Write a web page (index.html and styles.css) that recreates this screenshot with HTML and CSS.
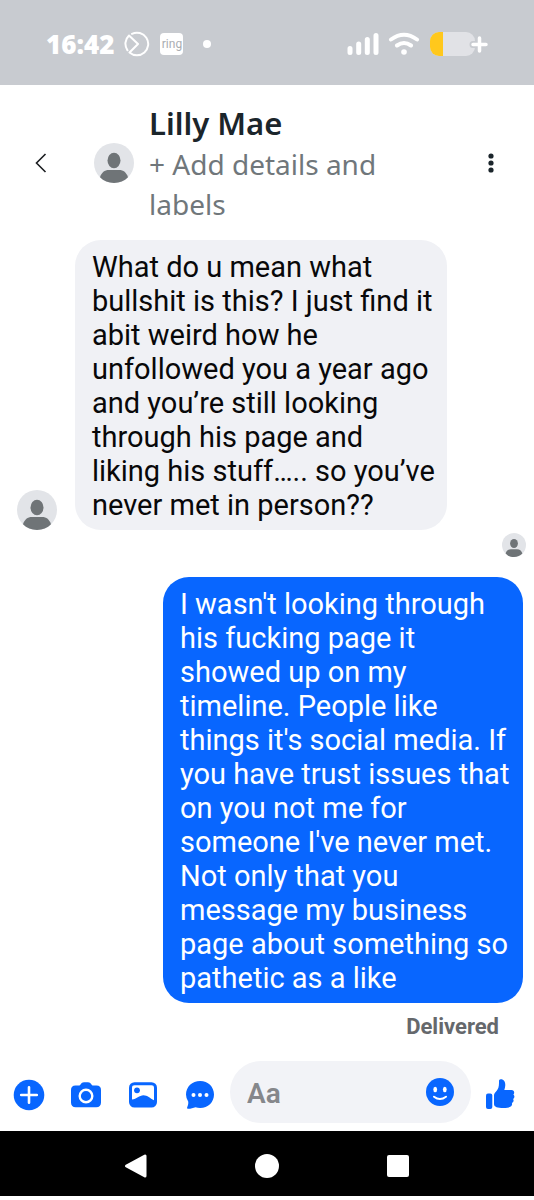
FILE: index.html
```html
<!DOCTYPE html>
<html lang="en">
<head>
<meta charset="utf-8">
<meta name="viewport" content="width=device-width, initial-scale=1">
<title>Lilly Mae</title>
<link rel="stylesheet" href="styles.css">
</head>
<body>
<svg class="defs" aria-hidden="true">
  <symbol id="avatar" viewBox="0 0 40 40">
    <circle cx="20" cy="20" r="20" fill="#e2e4e8"/>
    <ellipse cx="20" cy="17.500" rx="6.500" ry="7.700" fill="#6f7477"/>
    <path d="M6 34.300C7.500 29.500 10.500 27 15 27h10c4.500 0 7.500 2.500 9 7.300C30.500 38 25.500 40 20 40S9.500 38 6 34.300z" fill="#6f7477"/>
  </symbol>
</svg>
<div class="screen">
  <div class="status">
    <div class="status-left">
      <span class="clock">16:42</span>
      <svg width="26" height="26" viewBox="0 0 26 26" fill="none" stroke="#fff" stroke-width="2" stroke-linejoin="round" stroke-linecap="round"><path d="M8 2.800A11.300 11.300 0 1 1 5.500 21.500L14 13 5 4.500A11.300 11.300 0 0 0 3.500 19.300"/></svg>
      <span class="ring">ring</span>
      <span class="dot"></span>
    </div>
    <div class="status-right">
      <svg width="32" height="24" viewBox="0 0 32 24" stroke="#fff" stroke-width="5" stroke-linecap="round"><path d="M3 16.500v4M11.700 12v8.500M20.300 7.500v13M29 3.500v17"/></svg>
      <svg width="32" height="24" viewBox="0 0 32 24" fill="none" stroke="#fff" stroke-width="4" stroke-linecap="round"><path d="M3 7.500Q16-2 29 7.500M9 13.500Q16 8.500 23 13.500"/><circle cx="16" cy="20" r="2.800" fill="#fff" stroke="none"/></svg>
      <svg width="60" height="26" viewBox="0 0 60 26"><rect x="1" y="1" width="45" height="24" rx="9" fill="#e1e2e6"/><path d="M14 1v24h-4a9 9 0 0 1-9-9v-6a9 9 0 0 1 9-9z" fill="#ffc81c"/><path d="M50 7v13M44 13.500h13" stroke="#c8cbd0" stroke-width="7" stroke-linecap="round"/><path d="M50.500 7v13M44 13.500h13" stroke="#fff" stroke-width="3.500" stroke-linecap="round"/></svg>
    </div>
  </div>

  <header class="header">
    <button class="icon-btn" aria-label="Back"><svg width="14" height="22" viewBox="0 0 14 22" fill="none" stroke="#1c1e21" stroke-width="1.600"><path d="M11.500 2L2.500 11l9 9"/></svg></button>
    <svg class="avatar" role="img" aria-label="Profile picture"><use href="#avatar"/></svg>
    <div class="title">
      <h1>Lilly Mae</h1>
      <button class="details">+ Add details and labels</button>
    </div>
    <button class="icon-btn" aria-label="More options"><svg width="8" height="22" viewBox="0 0 8 22" fill="#1b252b"><circle cx="4" cy="4" r="2.600"/><circle cx="4" cy="11" r="2.600"/><circle cx="4" cy="18" r="2.600"/></svg></button>
  </header>

  <main class="thread">
    <div class="incoming">
      <svg class="avatar" role="img" aria-label="Lilly Mae"><use href="#avatar"/></svg>
      <p class="bubble bubble-in">What do u mean what bullshit is this? I just find it abit weird how he unfollowed you a year ago and you’re still looking through his page and liking his stuff….. so you’ve never met in person??</p>
    </div>
    <svg class="seen" role="img" aria-label="Seen"><use href="#avatar"/></svg>
    <p class="bubble bubble-out">I wasn't looking through his fucking page it showed up on my timeline. People like things it's social media. If you have trust issues that on you not me for someone I've never met. Not only that you message my business page about something so pathetic as a like</p>
    <p class="delivered">Delivered</p>
  </main>

  <form class="composer">
    <div class="tools">
    <button type="button" class="icon-btn" aria-label="Add"><svg width="32" height="32" viewBox="0 0 32 32"><circle cx="16" cy="16" r="15.300" fill="#0866ff"/><path d="M16 8.200v15.600M8.200 16h15.600" stroke="#fff" stroke-width="2.600" stroke-linecap="round"/></svg></button>
    <button type="button" class="icon-btn" aria-label="Camera"><svg width="32" height="32" viewBox="0 0 32 32"><path d="M5.500 6.500h3.200c1 0 1.500-.4 2-1.200.7-1.300 1.800-2 3.300-2h4c1.500 0 2.600.7 3.300 2 .5.800 1 1.200 2 1.200h3.200c3 0 4.500 1.700 4.500 4.500v12.500c0 3-1.700 4.700-4.700 4.700H5.700c-3 0-4.700-1.700-4.700-4.700V11c0-2.800 1.500-4.500 4.500-4.500z" fill="#0866ff"/><circle cx="16" cy="17" r="6.300" fill="none" stroke="#fff" stroke-width="2.400"/></svg></button>
    <button type="button" class="icon-btn" aria-label="Gallery"><svg width="32" height="32" viewBox="0 0 32 32"><rect x="2" y="3.200" width="28" height="25.300" rx="5.500" fill="#0866ff"/><path d="M7.500 6.200h17c1.700 0 2.500.8 2.500 2.500v12.600c-4-2-6.500-5.100-10.500-5.100-4.300 0-7 4-11.500 4.300V8.700c0-1.700.8-2.500 2.500-2.500z" fill="#fff"/><circle cx="10" cy="11.300" r="2.900" fill="#0866ff"/></svg></button>
    <button type="button" class="icon-btn" aria-label="Saved replies"><svg width="32" height="32" viewBox="0 0 32 32"><path d="M16.200 2C24 2 30 7.800 30 15.500S24 29 16.200 29c-1.700 0-3.300-.3-4.700-.8-2.200.9-4.800 1.500-7.200 1.500-1.200 0-1.500-.9-1-1.800.8-1.500 1.200-3.400.9-5.300A13 13 0 0 1 2 15.500C2 7.800 8.200 2 16.200 2z" fill="#0866ff"/><g fill="#fff"><circle cx="9.500" cy="16" r="2"/><circle cx="16" cy="16" r="2"/><circle cx="22.500" cy="16" r="2"/></g></svg></button>
    </div>
    <div class="field">
      <input type="text" placeholder="Aa" aria-label="Message">
      <button type="button" class="icon-btn" aria-label="Emoji"><svg width="28" height="28" viewBox="0 0 28 28"><circle cx="14" cy="14" r="14" fill="#0866ff"/><ellipse cx="9.200" cy="11.500" rx="1.900" ry="2.700" fill="#fff"/><ellipse cx="18.800" cy="11.500" rx="1.900" ry="2.700" fill="#fff"/><path d="M8 18.700q6 4.600 12 0" fill="none" stroke="#fff" stroke-width="2" stroke-linecap="round"/></svg></button>
    </div>
    <button type="button" class="icon-btn like" aria-label="Like"><svg width="30" height="32" viewBox="0 0 30 32" fill="#0866ff"><rect x="1" y="15.500" width="6.300" height="15.500" rx="2"/><path d="M9 17.500c0-1.800 1-2.700 2.300-4.200 2-2.300 2.700-4.500 2.700-8.300V3.200C14 2 14.600 1.300 15.700 1.300c3.300 0 4.600 2.700 4.600 5.700 0 1.800-.5 3.500-1 5h7.200c1.700 0 2.700 1 2.700 2.500 0 .9-.3 1.500-.8 2 .6.500 1 1.200 1 2.100 0 1-.5 1.900-1.300 2.400.3.400.5.900.5 1.500 0 1.200-.7 2.100-1.700 2.500.1.300.2.600.2 1 0 2.400-2.500 4-8.600 4C12.500 30 9 29 9 26z"/></svg></button>
  </form>

  <nav class="nav">
    <button class="icon-btn" aria-label="Back"><svg width="26" height="26" viewBox="0 0 26 26"><path d="M3.500 13L22 3v20z" fill="#fff" stroke="#fff" stroke-width="3" stroke-linejoin="round"/></svg></button>
    <button class="icon-btn" aria-label="Home"><svg width="26" height="26" viewBox="0 0 26 26"><circle cx="13" cy="13" r="12" fill="#fff"/></svg></button>
    <button class="icon-btn" aria-label="Recent apps"><svg width="26" height="26" viewBox="0 0 26 26"><rect x="2" y="2" width="22" height="22" rx="2" fill="#fff"/></svg></button>
  </nav>
</div>
</body>
</html>
```
FILE: styles.css
```css
* { box-sizing: border-box; }
body {
  margin: 0;
  background: #fff;
  color: #080809;
  font-family: Roboto, "Liberation Sans", sans-serif;
}
h1, p { margin: 0; }
svg { display: block; flex: none; }
button { padding: 0; border: 0; background: none; font: inherit; color: inherit; cursor: pointer; }
.icon-btn { display: flex; flex: none; align-items: center; justify-content: center; }
.defs { position: absolute; width: 0; height: 0; }
.screen { display: flex; flex-direction: column; min-height: 100vh; padding-bottom: 4px; }

.status {
  display: flex;
  align-items: center;
  justify-content: space-between;
  height: 85px;
  padding: 2px 45px 0 46px;
  background: #c8cbd0;
  color: #fff;
}
.status-left { display: flex; align-items: center; gap: 10px; }
.status-right { display: flex; align-items: center; gap: 9px; }
.clock { font: 800 26px/32px "Open Sans", sans-serif; }
.ring {
  width: 23px;
  border-radius: 4px;
  background: #fff;
  color: #aaadb2;
  font: 12px/22px Roboto, sans-serif;
  text-align: center;
}
.dot { width: 8px; height: 8px; margin-left: 10px; border-radius: 50%; background: #fff; }

.header {
  display: flex;
  align-items: center;
  padding: 17px 39px 16px 34px;
  font-family: "Noto Sans", sans-serif;
}
.avatar { width: 40px; height: 40px; }
.header .avatar { margin: 0 15px 0 46px; }
.title { flex: 1; padding-right: 80px; color: #1b252b; }
.title h1 { font-size: 31px; font-weight: 600; line-height: 42px; }
.details { display: block; color: #70777b; font-size: 28px; line-height: 40px; text-align: left; }

.thread { display: flex; flex-direction: column; padding: 0 11px 0 17px; }
.incoming { display: flex; align-items: flex-end; gap: 18px; }
.bubble { padding: 10px 12px 8px 17px; border-radius: 26px; font-size: 29px; line-height: 34px; }
.bubble-in { max-width: 372px; background: #f0f1f5; }
.bubble-out { align-self: flex-end; max-width: 360px; margin-top: 20px; background: #0866ff; color: #fff; }
.seen { align-self: flex-end; width: 24px; height: 24px; margin: 3px -3px 0 0; }
.delivered { align-self: flex-end; padding: 10px 24px 0 0; color: #65686c; font-size: 22px; font-weight: 700; line-height: 28px; }

.composer { display: flex; align-items: center; gap: 14px; margin-top: auto; padding: 0 19px 8px 13px; }
.tools { display: flex; gap: 25px; padding-top: 5px; }
.like { padding-top: 4px; }
.field { display: flex; flex: 1; align-items: center; min-width: 0; height: 62px; padding: 0 17px; border-radius: 31px; background: #f2f3f7; }
.field input { flex: 1; min-width: 0; padding: 3px 0 0; border: 0; outline: 0; background: none; color: #080809; font: 600 28px/34px Roboto, sans-serif; }
.field input::placeholder { color: #85878b; opacity: 1; }

.nav { display: flex; align-items: center; justify-content: center; gap: 105px; height: 65px; padding-top: 4px; background: #000; }
```
